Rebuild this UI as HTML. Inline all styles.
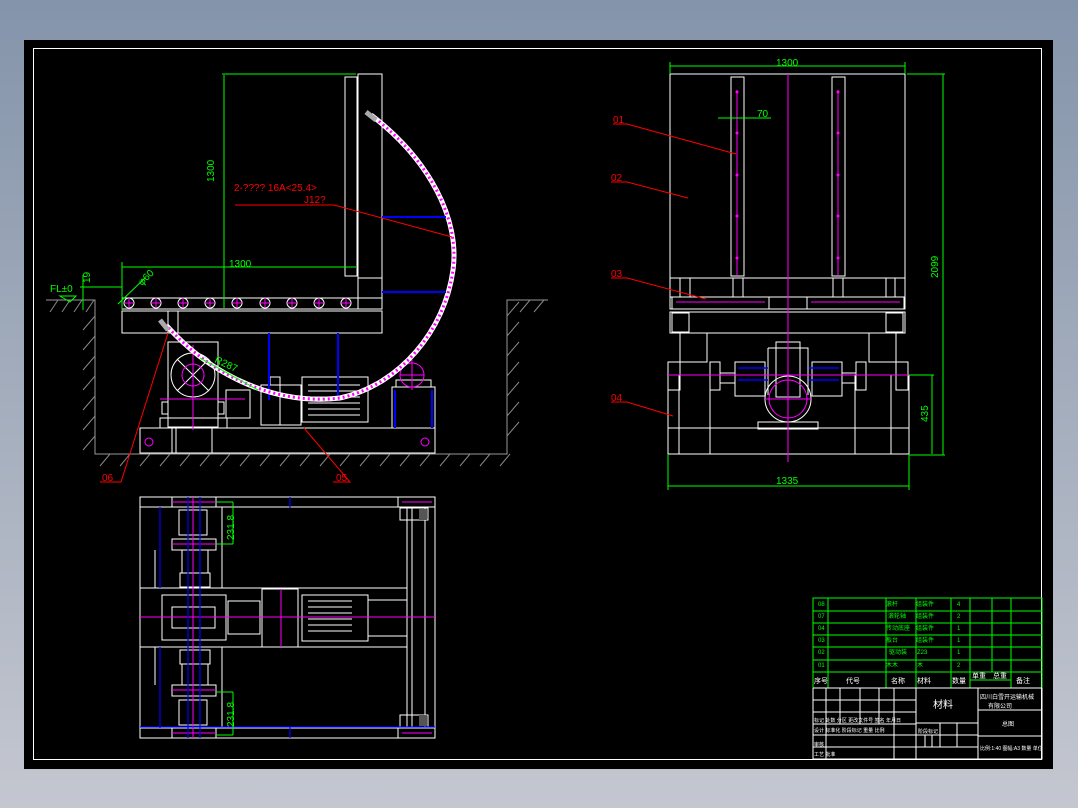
<!DOCTYPE html>
<html><head><meta charset="utf-8"><style>
html,body{margin:0;padding:0;width:1078px;height:808px;overflow:hidden;background:linear-gradient(#8494aa,#c4c7d0);}
svg{position:absolute;left:0;top:0}
text{font-family:"Liberation Sans","Noto Sans CJK SC",sans-serif}
</style></head><body>
<svg width="1078" height="808" viewBox="0 0 1078 808">
<rect x="24" y="40" width="1029" height="729" fill="#000"/>
<rect x="33.5" y="48.5" width="1008" height="711" fill="none" stroke="#fff" stroke-width="1"/>

<!-- ===== SIDE VIEW ===== -->
<g fill="none" stroke="#fff" stroke-width="1">
<!-- pit -->
<path d="M46,300H95V454H507V300H548" stroke="#999"/>
<g stroke="#888">
<path d="M50,312l8,-12M62,312l8,-12M74,312l8,-12M86,312l8,-12"/>
<path d="M83,330l12,-14M83,350l12,-14M83,370l12,-14M83,390l12,-14M83,410l12,-14M83,430l12,-14M83,450l12,-14"/>
<path d="M100,466l10,-12M120,466l10,-12M140,466l10,-12M160,466l10,-12M180,466l10,-12M200,466l10,-12M220,466l10,-12M240,466l10,-12M260,466l10,-12M280,466l10,-12M300,466l10,-12M320,466l10,-12M340,466l10,-12M360,466l10,-12M380,466l10,-12M400,466l10,-12M420,466l10,-12M440,466l10,-12M460,466l10,-12M480,466l10,-12M500,466l10,-12"/>
<path d="M507,316l12,-14M507,336l12,-14M507,356l12,-14M507,376l12,-14M507,396l12,-14M507,416l12,-14M507,436l12,-14M520,312l10,-12M534,312l10,-12"/>
</g>
<!-- tall bin -->
<rect x="358" y="74" width="24" height="235"/>
<rect x="345" y="77" width="12" height="199"/>
<path d="M358,278H382"/>
<!-- platform -->
<rect x="122" y="298" width="260" height="11"/>
<rect x="122" y="311" width="260" height="22"/>
<path d="M168,311V333M178,311V333"/>
<!-- gearbox -->
<rect x="168" y="342" width="50" height="85"/>
<circle cx="193" cy="375" r="22"/>
<path d="M177,359l32,32M209,359l-32,32"/>
<rect x="162" y="402" width="6" height="12"/><rect x="218" y="402" width="6" height="12"/>
<rect x="160" y="418" width="67" height="10"/>
<rect x="226" y="390" width="24" height="28"/>
<rect x="261" y="385" width="40" height="40"/>
<path d="M270,385V377H280V425"/>
<rect x="302" y="377" width="66" height="45"/>
<path d="M308,385H360M308,391H360M308,397H360M308,403H360M308,409H360M308,415H360"/>
<rect x="392" y="387" width="43" height="41"/>
<rect x="396" y="380" width="35" height="7"/>
<!-- base -->
<rect x="140" y="428" width="295" height="25"/>
<path d="M172,428V453M176,428V453M212,428V453"/>
</g>
<circle cx="193" cy="375" r="11" fill="none" stroke="#f0f" stroke-width="1"/>
<circle cx="412" cy="375" r="12" fill="none" stroke="#f0f" stroke-width="1"/>
<circle cx="149" cy="442" r="4" fill="none" stroke="#f0f"/><circle cx="425" cy="442" r="4" fill="none" stroke="#f0f"/>
<path d="M193,345V430M160,399H245M412,360V390M400,375H424" stroke="#f0f" stroke-width="1"/>
<path d="M269,333V400M338,333V400M395,390V428M432,390V428" stroke="#00f" stroke-width="2"/>
<!-- rollers -->
<g fill="none" stroke="#fff">
<circle cx="129" cy="303" r="5"/><circle cx="156" cy="303" r="5"/><circle cx="183" cy="303" r="5"/><circle cx="210" cy="303" r="5"/><circle cx="237" cy="303" r="5"/><circle cx="265" cy="303" r="5"/><circle cx="292" cy="303" r="5"/><circle cx="319" cy="303" r="5"/><circle cx="346" cy="303" r="5"/>
</g>
<path d="M124,303h10M151,303h10M178,303h10M205,303h10M232,303h10M260,303h10M287,303h10M314,303h10M341,303h10M129,298v10M156,298v10M183,298v10M210,298v10M237,298v10M265,298v10M292,298v10M319,298v10M346,298v10" stroke="#f0f"/>
<!-- chain arc -->
<path d="M371,115 C430,160 460,220 453,270 C445,330 400,385 340,398 C280,405 215,380 166,325" fill="none" stroke="#fff" stroke-width="5"/>
<path d="M371,115 C430,160 460,220 453,270 C445,330 400,385 340,398 C280,405 215,380 166,325" fill="none" stroke="#f0f" stroke-width="3" stroke-dasharray="2 3"/>
<path d="M366,112l10,8M160,320l8,10" stroke="#aaa" stroke-width="5"/>
<path d="M382,217H446M382,292H446" stroke="#00f" stroke-width="2"/>
<!-- dims -->
<g stroke="#0f0" stroke-width="1" fill="none">
<path d="M222,74H356M224,75V308M122,267H356M122,262V310M88,287H122M83,275V310M80,287H88M145,278L118,304M200,358L258,390"/>
</g>
<g fill="#0f0" font-size="10">
<text x="229" y="267">1300</text>
<text transform="translate(214,182) rotate(-90)">1300</text>
<text x="50" y="292">FL±0</text>
<text transform="translate(90,283) rotate(-90)">19</text>
<text transform="translate(142,286) rotate(-45)">φ60</text>
<text transform="translate(214,362) rotate(25)">R287</text>
</g>
<path d="M60,296h16l-6,6z" fill="none" stroke="#0f0"/>
<g fill="#f00" font-size="10">
<text x="234" y="191">2-????  16A&lt;25.4&gt;</text>
<text x="304" y="203">J12?</text>
<text x="102" y="481">06</text>
<text x="336" y="481">05</text>
</g>
<path d="M235,205H334L452,237M100,482H121L168,333M333,482H350L304,428" stroke="#f00" fill="none"/>

<!-- ===== FRONT VIEW ===== -->
<g fill="none" stroke="#fff">
<rect x="670" y="74" width="235" height="204"/>
<rect x="731" y="77" width="13" height="199"/>
<rect x="832" y="77" width="13" height="199"/>
<path d="M670,278V309H905V278M670,297H905"/>
<rect x="672" y="297" width="97" height="12"/><rect x="807" y="297" width="97" height="12"/>
<path d="M680,278V297M690,278V297M733,278V297M743,278V297M833,278V297M843,278V297M886,278V297M895,278V297"/>
<rect x="670" y="312" width="235" height="21"/>
<rect x="672" y="313" width="17" height="19"/><rect x="886" y="313" width="17" height="19"/>
<rect x="680" y="333" width="27" height="29"/><rect x="869" y="333" width="27" height="29"/>
<rect x="668" y="375" width="241" height="79"/>
<path d="M668,428H909M679,375V454M891,375V454M710,375V454M855,375V454"/>
<rect x="776" y="342" width="24" height="55"/>
<path d="M768,348H808V395M768,348V395"/>
<circle cx="788" cy="399" r="23"/>
<rect x="758" y="422" width="60" height="7"/>
<rect x="735" y="362" width="30" height="34"/><rect x="812" y="362" width="30" height="34"/>
<rect x="668" y="362" width="12" height="28"/><rect x="896" y="362" width="12" height="28"/>
<rect x="710" y="362" width="10" height="28"/><rect x="856" y="362" width="10" height="28"/>
<path d="M720,373H735M720,383H735M842,373H856M842,383H856"/>
</g>
<circle cx="788" cy="399" r="19" fill="none" stroke="#f0f"/>
<path d="M788,74V462M765,399H812M668,375H909M737,90V275M838,90V275M676,302H765M811,302H900" stroke="#f0f" stroke-width="1" fill="none"/>
<g fill="#f0f"><circle cx="737" cy="92" r="1.5"/><circle cx="737" cy="133" r="1.5"/><circle cx="737" cy="175" r="1.5"/><circle cx="737" cy="216" r="1.5"/><circle cx="737" cy="258" r="1.5"/><circle cx="838" cy="92" r="1.5"/><circle cx="838" cy="133" r="1.5"/><circle cx="838" cy="175" r="1.5"/><circle cx="838" cy="216" r="1.5"/><circle cx="838" cy="258" r="1.5"/></g>
<path d="M738,368h30M738,380h30M809,368h30M809,380h30" stroke="#00f" stroke-width="1.5"/>
<g stroke="#0f0" fill="none">
<path d="M670,66H905M670,62V74M905,62V74M907,74H945M943,74V455M909,455H945M909,375H934M932,375V454M668,486H909M668,454V490M909,454V490M718,118H771"/>
</g>
<g fill="#0f0" font-size="10">
<text x="776" y="66">1300</text>
<text x="776" y="484">1335</text>
<text x="757" y="117">70</text>
<text transform="translate(938,278) rotate(-90)">2099</text>
<text transform="translate(928,422) rotate(-90)">435</text>
</g>
<g fill="#f00" font-size="10">
<text x="613" y="123">01</text><text x="611" y="181">02</text><text x="611" y="277">03</text><text x="611" y="401">04</text>
</g>
<path d="M613,124H627L736,154M611,182H627L688,198M611,278H627L706,299M611,402H627L673,416" stroke="#f00" fill="none"/>

<!-- ===== TOP VIEW ===== -->
<g fill="none" stroke="#fff">
<rect x="140" y="497" width="295" height="241"/>
<path d="M140,507H435M140,728H435M140,588H407M140,647H407M407,507V728M425,507V728M412,507V728"/>
<rect x="172" y="497" width="44" height="10"/><rect x="172" y="728" width="44" height="10"/>
<rect x="172" y="539" width="44" height="11"/><rect x="172" y="685" width="44" height="11"/>
<rect x="179" y="510" width="28" height="25"/><rect x="179" y="700" width="28" height="25"/>
<rect x="180" y="573" width="30" height="14"/><rect x="180" y="650" width="30" height="14"/>
<path d="M182,550V573M208,550V573M182,664V685M208,664V685M155,550V588M155,647V685M222,507V588M222,647V728"/>
<rect x="162" y="595" width="64" height="45"/>
<rect x="172" y="607" width="43" height="21"/>
<rect x="228" y="601" width="32" height="33"/>
<rect x="262" y="589" width="36" height="58"/>
<rect x="302" y="595" width="66" height="46"/>
<path d="M308,601H352M308,607H352M308,613H352M308,619H352M308,625H352M308,631H352M368,600H407M368,636H407"/>
<rect x="398" y="497" width="37" height="10"/><rect x="398" y="728" width="37" height="10"/>
<rect x="400" y="508" width="28" height="12"/><rect x="400" y="715" width="28" height="12"/>
</g>
<path d="M140,617H435M193,497V738M281,589V647M172,502H216M172,733H216M172,544H216M172,690H216M402,502H432M402,733H432" stroke="#f0f" fill="none"/>
<path d="M188,497V738M200,497V738M140,727H435M160,507V588M160,647V728M290,497V508M290,727V738" stroke="#00f" stroke-width="1.2" fill="none"/>
<rect x="419" y="509" width="8" height="11" fill="#555"/><rect x="419" y="715" width="8" height="11" fill="#555"/>
<path d="M216,502H233M233,502V544M216,544H233M216,692H233M233,692V735M216,735H233" stroke="#0f0" fill="none"/>
<g fill="#0f0" font-size="10">
<text transform="translate(234,540) rotate(-90)">231.8</text>
<text transform="translate(234,727) rotate(-90)">231.8</text>
</g>

<!-- ===== TITLE BLOCK ===== -->
<g stroke="#0f0" fill="none">
<rect x="813" y="598" width="229" height="90"/>
<path d="M813,611H1042M813,623H1042M813,635H1042M813,647H1042M813,660H1042M813,672H1042M970,680H1011"/>
<path d="M828,598V688M886,598V688M916,598V688M951,598V688M970,598V688M992,598V672M1011,598V688"/>
</g>
<g stroke="#fff" fill="none">
<path d="M813,688V759H1042V688M813,688H1042"/>
<path d="M916,688V759M978,688V759M978,710H1042M978,736H1042M916,723H978M916,735H978M916,747H978M813,700H916M813,712H916M813,724H916M813,735H916M813,747H916"/>
<path d="M826,688V759M840,688V724M860,688V724M879,688V724M894,688V759M940,723V735M957,723V747M925,735V747M932,735V747M940,735V747"/>
</g>
<g fill="#0f0" font-size="6">
<text x="818" y="606">08</text><text x="818" y="618">07</text><text x="818" y="630">04</text><text x="818" y="642">03</text><text x="818" y="654">02</text><text x="818" y="667">01</text>
<text x="886" y="606">滚杆</text><text x="888" y="618">滚轮轴</text><text x="886" y="630">传动底座</text><text x="886" y="642">板台</text><text x="889" y="654">驱动装</text><text x="886" y="667">木木</text>
<text x="916" y="606">组装件</text><text x="916" y="618">组装件</text><text x="916" y="630">组装件</text><text x="916" y="642">组装件</text><text x="917" y="654">Z23</text><text x="917" y="667">木</text>
<text x="957" y="606">4</text><text x="957" y="618">2</text><text x="957" y="630">1</text><text x="957" y="642">1</text><text x="957" y="654">1</text><text x="957" y="667">2</text>
</g>
<g fill="#fff" font-size="7">
<text x="814" y="683">序号</text><text x="846" y="683">代号</text><text x="891" y="683">名称</text><text x="917" y="683">材料</text><text x="952" y="683">数量</text><text x="972" y="678">单重</text><text x="993" y="678">总重</text><text x="1016" y="683">备注</text>
<text x="933" y="708" font-size="10">材料</text>
<text x="980" y="699" font-size="6">四川白雪开运输机械</text><text x="988" y="708" font-size="6">有限公司</text>
<text x="1002" y="726" font-size="6">总图</text>
<text x="980" y="750" font-size="5">比例:1:40 图幅:A3 数量 单位</text>
<text x="814" y="722" font-size="5">标记 处数 分区 更改文件号 签名 年月日</text>
<text x="814" y="732" font-size="5">设计 标准化 阶段标记 重量 比例</text>
<text x="918" y="733" font-size="5">阶段标记</text>
<text x="814" y="746" font-size="5">审核</text><text x="814" y="756" font-size="5">工艺 批准</text>
</g>
</svg>
</body></html>
